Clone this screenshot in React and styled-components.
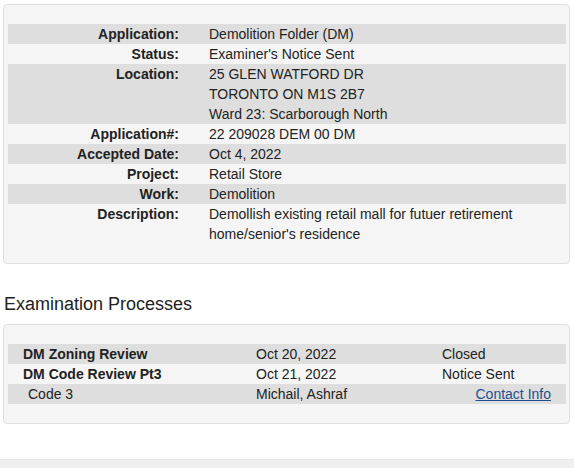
import React from 'react';
import styled, { createGlobalStyle } from 'styled-components';

const GlobalStyle = createGlobalStyle`
	html, body {
		margin: 0;
		padding: 0;
		background: #fff;
	}
	body {
		font-family: 'Liberation Sans', Arial, sans-serif;
		font-size: 14px;
		color: #222;
	}
`;

const details = [
	{ label: 'Application:', lines: ['Demolition Folder (DM)'] },
	{ label: 'Status:', lines: ["Examiner's Notice Sent"] },
	{
		label: 'Location:',
		lines: ['25 GLEN WATFORD DR', 'TORONTO ON M1S 2B7', 'Ward 23: Scarborough North'],
	},
	{ label: 'Application#:', lines: ['22 209028 DEM 00 DM'] },
	{ label: 'Accepted Date:', lines: ['Oct 4, 2022'] },
	{ label: 'Project:', lines: ['Retail Store'] },
	{ label: 'Work:', lines: ['Demolition'] },
	{
		label: 'Description:',
		lines: ['Demollish existing retail mall for futuer retirement', "home/senior's residence"],
	},
];

const processes = [
	{ name: 'DM Zoning Review', date: 'Oct 20, 2022', status: 'Closed' },
	{ name: 'DM Code Review Pt3', date: 'Oct 21, 2022', status: 'Notice Sent' },
];

const App = () => {
	return (
		<>
			<GlobalStyle />
			<Page>
				<Panel>
					{details.map((d, i) => (
						<DetailRow key={d.label} $striped={i % 2 === 0}>
							<Label>{d.label}</Label>
							<Value>
								{d.lines.map((line) => (
									<div key={line}>{line}</div>
								))}
							</Value>
						</DetailRow>
					))}
				</Panel>

				<SectionTitle>Examination Processes</SectionTitle>

				<Panel>
					{processes.map((p, i) => (
						<ProcessRow key={p.name} $striped={i % 2 === 0}>
							<ProcessName>{p.name}</ProcessName>
							<span>{p.date}</span>
							<span>{p.status}</span>
						</ProcessRow>
					))}
					<ProcessRow $striped>
						<Examiner>Code 3</Examiner>
						<span>Michail, Ashraf</span>
						<ContactLink href='#'>Contact Info</ContactLink>
					</ProcessRow>
				</Panel>
			</Page>
			<Footer />
		</>
	);
};

const Page = styled.main`
	display: flex;
	flex-direction: column;
	padding: 4px 4px 0 3px;
`;

const Panel = styled.section`
	display: flex;
	flex-direction: column;
	background-color: #f5f5f5;
	border: 1px solid #e0e0e0;
	border-radius: 4px;
	padding: 19px 3px 19px 4px;
`;

const DetailRow = styled.div`
	display: grid;
	grid-template-columns: 171px 1fr;
	column-gap: 30px;
	line-height: 20px;
	background-color: ${({ $striped }) => ($striped ? '#dedede' : 'transparent')};
`;

const Label = styled.div`
	text-align: right;
	font-weight: 700;
`;

const Value = styled.div`
	display: flex;
	flex-direction: column;
`;

const SectionTitle = styled.h2`
	margin: 29px 0 9px 1px;
	font-size: 18px;
	line-height: 22px;
	font-weight: 400;
	color: #222;
`;

const ProcessRow = styled.div`
	display: grid;
	grid-template-columns: 233px 186px 1fr;
	padding: 0 15px;
	line-height: 20px;
	background-color: ${({ $striped }) => ($striped ? '#dedede' : 'transparent')};
`;

const ProcessName = styled.span`
	font-weight: 700;
`;

const Examiner = styled.span`
	padding-left: 5px;
`;

const ContactLink = styled.a`
	justify-self: end;
	color: #1f4f8f;
	text-decoration: underline;
`;

const Footer = styled.footer`
	margin-top: 35px;
	height: 12px;
	background-color: #efefef;
	border-top: 1px solid #e6e6e6;
`;

export default App;
